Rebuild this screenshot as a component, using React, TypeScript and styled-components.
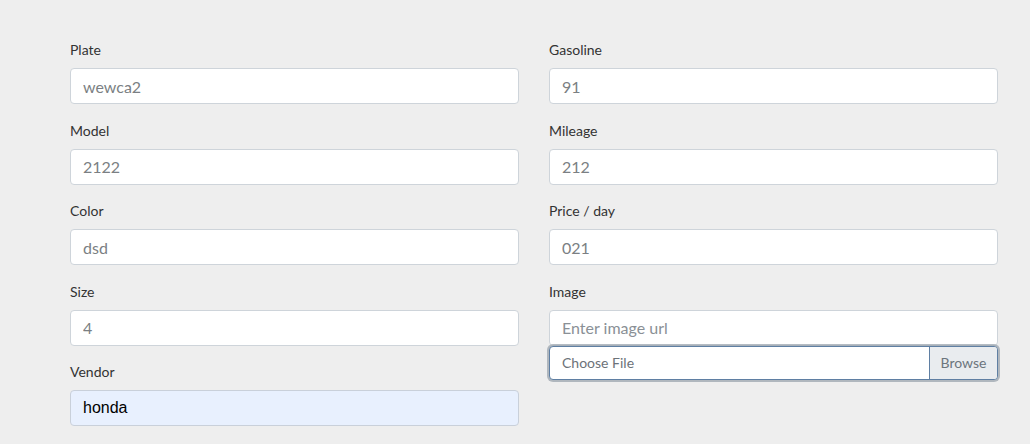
import React from "react";
import styled, { createGlobalStyle } from "styled-components";

const GlobalStyle = createGlobalStyle`
  html, body {
    margin: 0;
    padding: 0;
    background-color: #eeeeee;
    font-family: Lato, "Open Sans", sans-serif;
  }
`;

const Wrapper = styled.section`
  background-color: #eeeeee;
  min-height: 444px;
  padding: 39px 0 0 70px;
  box-sizing: border-box;
`;

const Form = styled.form`
  display: grid;
  grid-template-columns: 449px 449px;
  column-gap: 30px;
  align-items: start;
`;

const Column = styled.div`
  display: flex;
  flex-direction: column;
`;

const Group = styled.div`
  display: flex;
  flex-direction: column;
  margin-bottom: 15.5px;
`;

const Label = styled.label`
  font-size: 14px;
  line-height: 21px;
  color: #333;
  margin-bottom: 8px;
`;

const Input = styled.input<{ $autofill?: boolean }>`
  height: 36px;
  box-sizing: border-box;
  width: 100%;
  padding: 0 12px;
  border: 1px solid ${(p) => (p.$autofill ? "#c9d0da" : "#ced4da")};
  border-radius: 4px;
  background-color: ${(p) => (p.$autofill ? "#e8f0fe" : "#ffffff")};
  font-family: ${(p) =>
    p.$autofill ? '"Liberation Sans", Arial, sans-serif' : "Lato, sans-serif"};
  font-size: 16px;
  color: ${(p) => (p.$autofill ? "#000" : "#7b7f83")};
  outline: none;
  &::placeholder {
    color: #8a9096;
  }
`;

const FileBox = styled.div`
  display: flex;
  height: 34px;
  box-sizing: border-box;
  border: 1px solid #5f7fa3;
  border-radius: 4px;
  background: #fff;
  box-shadow: 0 0 0 2px rgba(150, 160, 170, 0.7);
  overflow: hidden;
  font-size: 14px;
`;

const FileName = styled.div`
  flex: 1;
  display: flex;
  align-items: center;
  padding-left: 12px;
  color: #6c7278;
`;

const Browse = styled.div`
  width: 67px;
  display: flex;
  align-items: center;
  justify-content: center;
  background-color: #e9ecef;
  border-left: 1px solid #5f7fa3;
  color: #6c757d;
`;

type Field = { label: string; value: string; autofill?: boolean };

const left: Field[] = [
  { label: "Plate", value: "wewca2" },
  { label: "Model", value: "2122" },
  { label: "Color", value: "dsd" },
  { label: "Size", value: "4" },
  { label: "Vendor", value: "honda", autofill: true },
];

const right: Field[] = [
  { label: "Gasoline", value: "91" },
  { label: "Mileage", value: "212" },
  { label: "Price / day", value: "021" },
];

const FieldGroup = ({ label, value, autofill }: Field) => (
  <Group>
    <Label>{label}</Label>
    <Input $autofill={autofill} defaultValue={value} readOnly />
  </Group>
);

export default function App() {
  return (
    <Wrapper>
      <GlobalStyle />
      <Form onSubmit={(e) => e.preventDefault()}>
        <Column>
          {left.map((f) => (
            <FieldGroup key={f.label} {...f} />
          ))}
        </Column>
        <Column>
          {right.map((f) => (
            <FieldGroup key={f.label} {...f} />
          ))}
          <Group>
            <Label>Image</Label>
            <Input placeholder="Enter image url" readOnly />
            <FileBox>
              <FileName>Choose File</FileName>
              <Browse>Browse</Browse>
            </FileBox>
          </Group>
        </Column>
      </Form>
    </Wrapper>
  );
}
